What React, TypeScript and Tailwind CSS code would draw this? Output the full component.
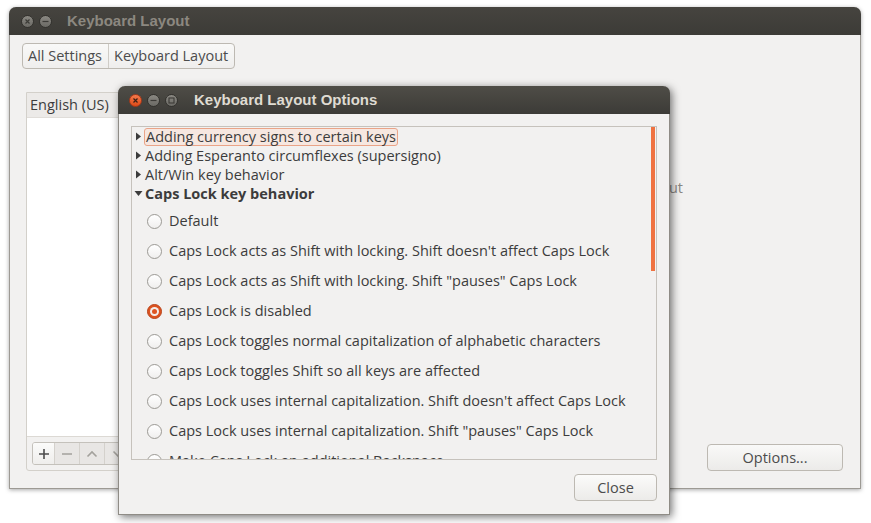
import React from "react";

function Circ({ kind, active }: { kind: "close" | "min" | "max"; active?: boolean }) {
  const orange = kind === "close" && active;
  return (
    <div
      className={
        "w-[13px] h-[13px] rounded-full flex items-center justify-center border " +
        (orange
          ? "bg-[linear-gradient(#f47a4c,#dc4a17)] border-[#a8391a]"
          : "bg-[linear-gradient(#8a8882,#6a6964)] border-[#33322e]")
      }
    >
      <svg width="9" height="9" viewBox="0 0 9 9">
        {kind === "close" && (
          <path d="M2.5 2.5 L6.5 6.5 M6.5 2.5 L2.5 6.5" stroke={orange ? "#3b2016" : "#3c3b37"} strokeWidth="1.2" />
        )}
        {kind === "min" && <path d="M1.5 4.5 H7.5" stroke="#3c3b37" strokeWidth="1.2" />}
        {kind === "max" && <rect x="2" y="2" width="5" height="5" fill="none" stroke="#3c3b37" strokeWidth="1.1" />}
      </svg>
    </div>
  );
}

function Radio({ checked }: { checked?: boolean }) {
  if (checked)
    return (
      <div className="w-[15px] h-[15px] shrink-0 rounded-full bg-[#dd5320] border border-[#b9441a] flex items-center justify-center">
        <div className="w-[9px] h-[9px] rounded-full bg-[#f3efec] flex items-center justify-center">
          <div className="w-[5px] h-[5px] rounded-full bg-[#de5522]" />
        </div>
      </div>
    );
  return <div className="w-[15px] h-[15px] shrink-0 rounded-full border border-[#9c9a95] bg-[linear-gradient(#ffffff,#f0efee)]" />;
}

function Tri({ down }: { down?: boolean }) {
  return (
    <svg width="9" height="9" viewBox="0 0 9 9" className="shrink-0">
      {down ? <path d="M0.5 2 L8.5 2 L4.5 7 Z" fill="#3c3c3c" /> : <path d="M2 0.5 L7 4.5 L2 8.5 Z" fill="#3c3c3c" />}
    </svg>
  );
}

const radios = [
  { t: "Default" },
  { t: "Caps Lock acts as Shift with locking. Shift doesn't affect Caps Lock" },
  { t: 'Caps Lock acts as Shift with locking. Shift "pauses" Caps Lock' },
  { t: "Caps Lock is disabled", c: true },
  { t: "Caps Lock toggles normal capitalization of alphabetic characters" },
  { t: "Caps Lock toggles Shift so all keys are affected" },
  { t: "Caps Lock uses internal capitalization. Shift doesn't affect Caps Lock" },
  { t: 'Caps Lock uses internal capitalization. Shift "pauses" Caps Lock' },
  { t: "Make Caps Lock an additional Backspace" },
];

export default function App() {
  return (
    <div className="relative w-[871px] h-[523px] bg-white overflow-hidden font-['Open_Sans',sans-serif] text-[14.5px] text-[#3c3c3c]">
      {/* Main window */}
      <div className="absolute left-[9px] top-[7px] w-[852px] h-[482px] rounded-t-[7px] flex flex-col bg-[#f2f1f0] border-x border-b border-[#9d9a94] shadow-[0_1px_4px_rgba(0,0,0,0.35)]">
        <div className="h-[28px] -mx-px rounded-t-[7px] bg-[linear-gradient(#46443f,#3c3b37)] flex items-center pl-[12px] shrink-0">
          <div className="flex gap-[5px]">
            <Circ kind="close" />
            <Circ kind="min" />
          </div>
          <span className="ml-[15px] font-bold font-['Liberation_Sans',sans-serif] text-[#8c8880] text-[15px]">Keyboard Layout</span>
        </div>
        <div className="flex-1 flex flex-col pl-[12px] pr-[17px] pt-[8px] pb-[17px]">
          <div className="flex self-start h-[26px] rounded-[4px] border border-[#bdb9b2] bg-[linear-gradient(#f9f9f8,#efeeed)] text-[#4c4c4c]">
            <div className="pl-[5px] pr-[6px] flex items-center border-r border-[#cfccc6]">All Settings</div>
            <div className="pl-[5px] pr-[6px] flex items-center">Keyboard Layout</div>
          </div>
          <div className="flex flex-1 mt-[23px]">
            <div className="ml-[4px] w-[170px] flex flex-col border border-[#d3d0ca] rounded-b-[3px]">
              <div className="h-[25px] bg-[#eceae8] flex items-center pl-[3px] text-[#3c3c3c] border-b border-[#e0ddd9]">
                English (US)
              </div>
              <div className="flex-1 bg-white" />
              <div className="h-[34px] border-t border-[#dcd9d4] flex items-center pl-[5px]">
                <div className="flex h-[23px] border border-[#c4c1bb] rounded-[3px] overflow-hidden">
                  <div className="w-[22px] bg-[linear-gradient(#fbfbfa,#efeeec)] flex items-center justify-center border-r border-[#d4d1cc]">
                    <svg width="12" height="12" viewBox="0 0 12 12"><path d="M6 1 V11 M1 6 H11" stroke="#4c4c4c" strokeWidth="1.6" /></svg>
                  </div>
                  <div className="w-[25px] bg-[#e8e6e4] flex items-center justify-center border-r border-[#d4d1cc]">
                    <svg width="12" height="12" viewBox="0 0 12 12"><path d="M1 6 H11" stroke="#a3a19c" strokeWidth="1.6" /></svg>
                  </div>
                  <div className="w-[25px] bg-[#e8e6e4] flex items-center justify-center border-r border-[#d4d1cc]">
                    <svg width="12" height="12" viewBox="0 0 12 12"><path d="M1.5 8.5 L6 4 L10.5 8.5" fill="none" stroke="#a3a19c" strokeWidth="1.6" /></svg>
                  </div>
                  <div className="w-[25px] bg-[#e8e6e4] flex items-center justify-center">
                    <svg width="12" height="12" viewBox="0 0 12 12"><path d="M1.5 3.5 L6 8 L10.5 3.5" fill="none" stroke="#a3a19c" strokeWidth="1.6" /></svg>
                  </div>
                </div>
              </div>
            </div>
            <div className="flex-1 flex flex-col">
              <div className="mt-[85px] w-[487px] text-right text-[#8a8884]">Preview of the selected layout</div>
              <div className="flex-1" />
              <div className="self-end w-[136px] h-[27px] rounded-[4px] border border-[#bdb9b2] bg-[linear-gradient(#f9f9f8,#ecebe9)] flex items-center justify-center text-[#4c4c4c]">
                Options...
              </div>
            </div>
          </div>
        </div>
      </div>

      {/* Dialog */}
      <div className="absolute left-[118px] top-[86px] w-[552px] h-[429px] rounded-t-[7px] flex flex-col bg-[#f2f1f0] border-x border-b border-[#8f8c86] shadow-[2px_2px_8px_rgba(0,0,0,0.55)]">
        <div className="h-[28px] -mx-px rounded-t-[7px] bg-[linear-gradient(#4f4d47,#3c3b37)] flex items-center pl-[11px] shrink-0">
          <div className="flex gap-[5px]">
            <Circ kind="close" active />
            <Circ kind="min" />
            <Circ kind="max" />
          </div>
          <span className="ml-[16px] font-bold font-['Liberation_Sans',sans-serif] text-[#dfdbd2] text-[15px]">Keyboard Layout Options</span>
        </div>
        <div className="flex-1 flex flex-col px-[12px] pt-[12px] pb-[13px]">
          <div className="relative h-[334px] border border-[#c6c2bc] bg-[#f2f1f0] overflow-hidden">
            <div className="flex flex-col">
              <div className="h-[19px] flex items-center pl-[2px]">
                <Tri />
                <span className="ml-[1px] px-px h-[18px] flex items-center rounded-[3px] border border-[#eaa488] bg-[#f6e7e0]">Adding currency signs to certain keys</span>
              </div>
              <div className="h-[19px] flex items-center pl-[2px]">
                <Tri />
                <span className="ml-[2px]">Adding Esperanto circumflexes (supersigno)</span>
              </div>
              <div className="h-[19px] flex items-center pl-[2px]">
                <Tri />
                <span className="ml-[2px]">Alt/Win key behavior</span>
              </div>
              <div className="h-[19px] flex items-center pl-[2px]">
                <Tri down />
                <span className="ml-[2px] font-bold">Caps Lock key behavior</span>
              </div>
              <div className="pt-[3px] flex flex-col">
                {radios.map((r, i) => (
                  <div key={i} className="h-[30px] flex items-center pl-[15px]">
                    <Radio checked={r.c} />
                    <span className="ml-[7px] whitespace-nowrap">{r.t}</span>
                  </div>
                ))}
              </div>
            </div>
            <div className="absolute right-[1px] top-0 w-[4px] h-[144px] bg-[#ef7240]" />
          </div>
          <div className="flex-1" />
          <div className="self-end w-[83px] h-[27px] rounded-[4px] border border-[#bdb9b2] bg-[linear-gradient(#fbfbfa,#ecebe9)] flex items-center justify-center text-[#4c4c4c]">
            Close
          </div>
        </div>
      </div>
    </div>
  );
}
